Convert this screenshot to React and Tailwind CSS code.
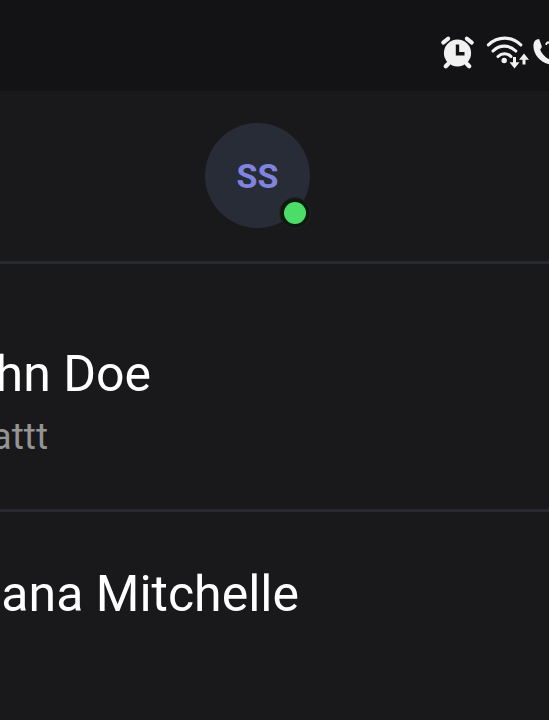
function StatusIcons() {
  return (
    <svg width="120" height="50" viewBox="429 25 120 50" className="block" fill="none" stroke="#f1f1f1">
      <circle cx="457.5" cy="53" r="13.6" fill="#f1f1f1" stroke="none" />
      <path d="M443.2 42.600l5-4M466.800 38.600l5 4" strokeWidth="4" strokeLinecap="round" />
      <path d="M448 64l-2.200 2.200M467 64l2.200 2.200" strokeWidth="4.400" strokeLinecap="round" />
      <path d="M457.500 44.500v9.300h7" stroke="#141416" strokeWidth="3.400" />
      <path d="M488.400 44.900c9.500-9 23-9 32.400 0M493 51c6.600-6.500 16.200-6.500 22.800 0M498 56.500c3.900-3.700 9.200-3.700 13 0" strokeWidth="3.100" strokeLinecap="round" />
      <circle cx="504.200" cy="60.500" r="2.700" fill="#f1f1f1" stroke="none" />
      <path d="M514.500 57v7M524 64.500v-7" strokeWidth="3" />
      <path d="M509.500 62.200h10l-5 6.300zM519 59.800h10l-5-6.300z" fill="#f1f1f1" stroke="none" />
      <path d="M533.500 44.500c.4-3.300 2.200-5.300 5.600-5.500l2.600 7c.2 1-.4 2-1.600 3.500 1.800 4.200 4.200 7 8.200 9.400l1.500-.6v6.200c-9.800-1.700-17.200-11-16.300-20z" fill="#f1f1f1" stroke="none" />
      <path d="M545.800 44.700l1.600-2.300h2" strokeWidth="2" />
    </svg>
  );
}

function Avatar() {
  return (
    <div className="relative flex h-[105px] w-[105px] items-center justify-center rounded-full bg-[#282c37]">
      <span className="text-[34px] leading-none font-bold text-[#7f85df]">SS</span>
      <span className="absolute top-[73.5px] left-[73.500px] h-8 w-8 rounded-full border border-[#1d2822] bg-[#101812] p-1">
        <span className="block h-[22px] w-[22px] rounded-full bg-[#4bdd67]" />
      </span>
    </div>
  );
}

export default function App() {
  return (
    <div className="flex h-[720px] w-[549px] flex-col overflow-hidden bg-[#19191b] font-['Roboto',sans-serif] whitespace-nowrap">
      <div className="flex h-[91px] shrink-0 justify-end bg-[#131315] pt-[25px]">
        <StatusIcons />
      </div>
      <header className="h-[173px] shrink-0 border-b-[3px] border-[#252a31] pt-8 pl-[205px]">
        <Avatar />
      </header>
      <div className="h-[248px] shrink-0 border-b-[3px] border-[#272832] pt-[78px]">
        <div className="flex w-[151px] justify-end text-[50px] leading-[64px] text-white">hn Doe</div>
        <div className="flex w-[48px] justify-end pt-[5px] text-[37px] leading-[52px] text-[#949494]">attt</div>
      </div>
      <div className="flex w-[299px] justify-end pt-[50px] text-[50px] leading-[64px] text-white">ana Mitchelle</div>
    </div>
  );
}
